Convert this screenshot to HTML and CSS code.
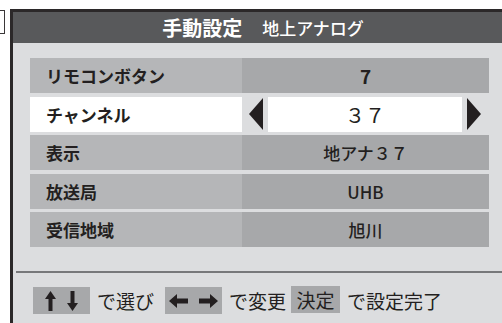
FILE: index.html
```html
<!DOCTYPE html>
<html lang="ja">
<head>
    <meta charset="UTF-8">
    <title>手動設定</title>
    <link rel="stylesheet" href="styles.css">
</head>
<body>
    <div class="bracket"></div>
    <div class="panel">
        <header class="head">
            <span class="head-main">手動設定</span>
            <span class="head-sub">地上アナログ</span>
        </header>
        <div class="rows">
            <div class="row">
                <div class="label">リモコンボタン</div>
                <div class="value bold">7</div>
            </div>
            <div class="row active">
                <div class="label">チャンネル</div>
                <div class="value select">
                    <svg class="tri" width="14" height="32" viewBox="0 0 14 32"><path d="M0 16 L14 0 V32 Z" fill="#231f20"/></svg>
                    <div class="box">３７</div>
                    <svg class="tri" width="14" height="32" viewBox="0 0 14 32"><path d="M14 16 L0 0 V32 Z" fill="#231f20"/></svg>
                </div>
            </div>
            <div class="row">
                <div class="label">表示</div>
                <div class="value">地アナ３７</div>
            </div>
            <div class="row">
                <div class="label">放送局</div>
                <div class="value">UHB</div>
            </div>
            <div class="row">
                <div class="label">受信地域</div>
                <div class="value">旭川</div>
            </div>
        </div>
        <div class="sep"></div>
        <footer class="foot">
            <span class="key">
                <svg width="11" height="20" viewBox="0 0 11 20"><path d="M5.5 0 L11 8 H7.5 V20 H3.5 V8 H0 Z" fill="#231f20"/></svg>
                <svg width="11" height="20" viewBox="0 0 11 20"><path d="M5.5 20 L11 12 H7.5 V0 H3.5 V12 H0 Z" fill="#231f20"/></svg>
            </span>
            <span class="txt">で選び</span>
            <span class="key">
                <svg width="19" height="14" viewBox="0 0 19 14"><path d="M0 7 L8 0 V4.5 H19 V9.5 H8 V14 Z" fill="#231f20"/></svg>
                <svg width="19" height="14" viewBox="0 0 19 14"><path d="M19 7 L11 0 V4.5 H0 V9.5 H11 V14 Z" fill="#231f20"/></svg>
            </span>
            <span class="txt short">で変更</span>
            <span class="key word">決定</span>
            <span class="txt">で設定完了</span>
        </footer>
    </div>
</body>
</html>
```
FILE: styles.css
```css
body{
    margin: 0px;
    padding: 0px;
    background-color: white;
    font-family: "Noto Sans CJK JP", "Noto Sans", sans-serif;
    color: #231f20;
    display: flex;
    align-items: flex-start;
    width: 502px;
    height: 323px;
    overflow: hidden;
}
.bracket{
    width: 5px;
    height: 22px;
    border: 1px solid #3a3738;
    margin-left: -2px;
    margin-top: 10px;
    margin-right: 5px;
    flex: none;
}
.panel{
    margin-top: 9px;
    width: 490px;
    height: 314px;
    border-left: 3px solid #2b2829;
    border-top: 3px solid #2b2829;
    background-color: #dcdddf;
    flex: none;
}
.head{
    height: 31px;
    background-color: #58595b;
    color: white;
    display: flex;
    align-items: center;
    justify-content: center;
    gap: 20px;
    padding-left: 10px;
}
.head-main{
    font-size: 20px;
    font-weight: 700;
}
.head-sub{
    font-size: 17px;
    font-weight: 500;
}
.rows{
    display: flex;
    flex-direction: column;
    gap: 3.5px;
    padding: 15px 14px 0px 17px;
}
.row{
    display: grid;
    grid-template-columns: 212px 247px;
    height: 35px;
}
.label{
    background-color: #b5b6b8;
    font-size: 17px;
    font-weight: 700;
    padding-left: 16px;
    display: flex;
    align-items: center;
}
.value{
    background-color: #a7a8aa;
    font-size: 17px;
    font-weight: 500;
    display: flex;
    align-items: center;
    justify-content: center;
}
.bold{
    font-weight: 700;
    font-size: 19px;
}
.active .label{
    background-color: white;
}
.select{
    background-color: transparent;
    justify-content: flex-start;
    padding-left: 7px;
    gap: 5px;
}
.box{
    background-color: white;
    width: 194px;
    height: 35px;
    display: flex;
    align-items: center;
    justify-content: center;
    font-size: 20px;
    font-weight: 400;
}
.sep{
    margin-top: 24px;
    margin-left: 3px;
    height: 2px;
    background-color: #77787a;
}
.foot{
    display: flex;
    align-items: center;
    padding: 14px 0px 0px 20px;
    font-size: 19px;
}
.key{
    background-color: #a7a8aa;
    height: 27px;
    width: 57px;
    display: flex;
    align-items: center;
    justify-content: center;
    gap: 11px;
}
.key + .key{
    gap: 3px;
}
.key.word{
    width: 49px;
    margin-top: -3px;
}
.txt{
    margin-left: 7px;
    margin-right: 11px;
}
.txt.short{
    margin-right: 5px;
}
```
